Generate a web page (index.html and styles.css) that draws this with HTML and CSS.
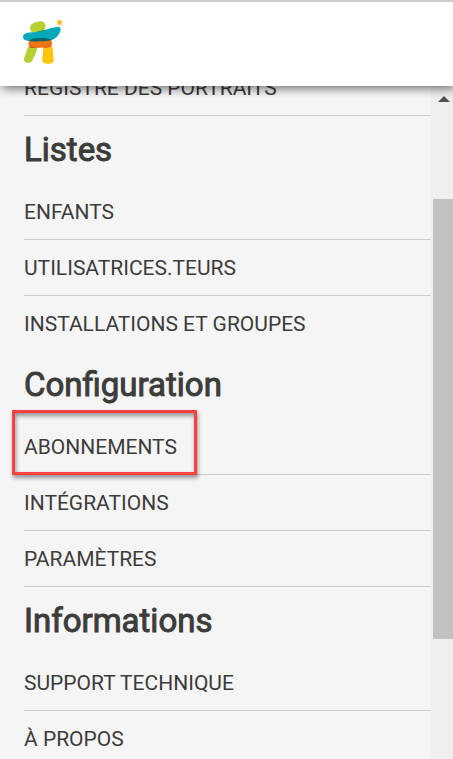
FILE: index.html
```html
<!DOCTYPE html>
<html lang="fr">
<head>
  <meta charset="UTF-8">
  <meta name="viewport" content="width=device-width, initial-scale=1.0">
  <title>Menu</title>
  <link rel="stylesheet" href="styles.css">
</head>
<body>
  <header class="topbar">
    <a href="#" class="logo" aria-label="Accueil">
      <svg width="42" height="46" viewBox="0 0 42 46" aria-hidden="true">
        <path fill="#b5cf35" d="M7 9.500C7 5 12 2.500 17 2.200C21 2 23 4.500 22.500 8C22 12 18 13 13 13C9 13 7 12.500 7 9.500Z"/>
        <path fill="#b5cf35" d="M5 28L14 28C14.500 31 13 34 11.500 37L9 42C8 44 5 44.500 2.500 43C0.500 42 0.800 40 1.500 38Z"/>
        <path fill="#fec50a" d="M20.500 28L29.500 28L30.700 40C31 43.500 29 44.800 25 44.800C21 44.800 19 43.500 19.200 40Z"/>
        <path fill="#05a7bb" d="M0 18C0 15 3 13.500 8 13.500C18 13.500 26 8.500 34 8C37.500 7.800 38.500 9.500 37 13C34.500 18.500 30 22 24 22C18 22 12 22.500 6 22C2 21.500 0 20.500 0 18Z"/>
        <path fill="#ee7516" d="M5.500 24C5.500 21.500 8 21 12 21L25 20.500C28.500 20.500 29.200 22 29 24.500C28.800 28 27 28.500 23 28.500L11 29C7 29 5.500 28 5.500 24Z"/>
        <path fill="#058f62" d="M7.500 13.500C13 13.300 18 12 22 10.500C20.500 12.800 17 13 13 13C10.500 13 8.500 13 7.500 13.500Z"/>
        <path fill="#08686c" d="M6 22C8 19.500 13 19 17 19C22 19 26 19.500 28 21C25 22.500 21 22 17 22.200C12 22.500 9 22.500 6 22Z"/>
        <path fill="#b9601a" d="M6 27L14 28.900L8.500 29C7 28.700 6.300 28 6 27Z"/>
        <path fill="#e6681a" d="M20.500 26.500L28.700 26.500C28 28.400 26.500 28.500 20.500 28.500Z"/>
        <path fill="#fbbd20" d="M35.800 0L37.200 1.800L39.500 1.700L38.400 3.800L39 6L36.800 5.400L34.600 6.500L34.800 4L33 2.600L35.200 2.100Z"/>
      </svg>
    </a>
  </header>

  <main class="content">
    <nav class="menu">
      <ul class="menu-list">
        <li><a href="#">REGISTRE DES PORTRAITS</a></li>
      </ul>

      <h2>Listes</h2>
      <ul class="menu-list last-plain">
        <li><a href="#">ENFANTS</a></li>
        <li><a href="#">UTILISATRICES.TEURS</a></li>
        <li><a href="#">INSTALLATIONS ET GROUPES</a></li>
      </ul>

      <h2>Configuration</h2>
      <ul class="menu-list">
        <li><a href="#" class="highlight">ABONNEMENTS</a></li>
        <li><a href="#">INTÉGRATIONS</a></li>
        <li><a href="#">PARAMÈTRES</a></li>
      </ul>

      <h2>Informations</h2>
      <ul class="menu-list last-plain">
        <li><a href="#">SUPPORT TECHNIQUE</a></li>
        <li><a href="#">À PROPOS</a></li>
      </ul>
    </nav>

    <div class="scrollbar" aria-hidden="true">
      <svg class="scroll-up" width="12" height="6" viewBox="0 0 12 6">
        <path fill="#505050" d="M6 0L12 6H0Z"/>
      </svg>
      <div class="scroll-track">
        <div class="scroll-thumb"></div>
      </div>
    </div>
  </main>
</body>
</html>
```

FILE: styles.css
```css
* {
  box-sizing: border-box;
}
body {
  display: flex;
  flex-direction: column;
  height: 100vh;
  margin: 0;
  overflow: hidden;
  background: #f5f5f5;
  color: #3c3c3b;
  font-family: Roboto, "Liberation Sans", sans-serif;
}

/* top bar */
.topbar {
  position: relative;
  z-index: 1;
  flex: none;
  padding: 17px 23px 21px;
  border-top: 2px solid #ccc;
  background: #fff;
  box-shadow: 2px 2px 10px rgba(0, 0, 0, 0.6);
}
.logo {
  display: block;
  width: 42px;
}
.logo svg {
  display: block;
}

/* menu, scrolled partly under the top bar */
.content {
  display: flex;
  flex: 1;
  min-height: 0;
}
.menu {
  flex: 1;
  margin-top: -26px;
  padding-left: 24px;
}
.menu h2 {
  margin: 0;
  font-size: 33px;
  font-weight: 400;
  line-height: 68px;
  -webkit-text-stroke: 1px #3c3c3b;
}
.menu-list {
  margin: 0;
  padding: 0;
  list-style: none;
}
.menu-list li {
  border-bottom: 1px solid #ccc;
}
.last-plain li:last-child {
  border-bottom: 0;
}
.menu-list a {
  display: inline-block;
  padding-top: 2px;
  color: inherit;
  font-size: 21px;
  line-height: 53px;
  text-decoration: none;
  vertical-align: top;
}

/* red frame around an entry */
.highlight {
  position: relative;
}
.highlight::after {
  content: "";
  position: absolute;
  inset: -9px -20px -1px -12px;
  border: 3px solid #fb4041;
  box-shadow: 1px 3px 4px rgba(0, 0, 0, 0.4), inset 1px 3px 4px rgba(0, 0, 0, 0.4);
}

/* scrollbar */
.scrollbar {
  display: flex;
  flex-direction: column;
  width: 22px;
  padding: 10px 0 0 2px;
  background: #efefef;
}
.scroll-up {
  flex: none;
  margin-left: 5px;
}
.scroll-track {
  flex: 1;
  padding-top: 97px;
}
.scroll-thumb {
  height: 440px;
  background: #c1c1c1;
}
```
